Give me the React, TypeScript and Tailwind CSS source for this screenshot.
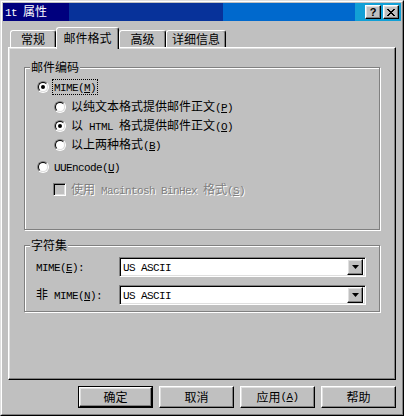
import React from 'react';

const mono = "font-['Liberation_Mono',monospace] text-[11px] tracking-[-0.6px]";
const raised =
  'border border-t-white border-l-white border-r-black border-b-black shadow-[inset_-1px_-1px_#808080,inset_1px_1px_#dfdfdf]';
const sunken =
  'border border-t-[#808080] border-l-[#808080] border-r-white border-b-white shadow-[inset_1px_1px_#000,inset_-1px_-1px_#dfdfdf]';

function Txt({ s }: { s: string }) {
  const parts = s.split(/([\x20-\x7e]+)/).filter(Boolean);
  return (
    <>
      {parts.map((p, i) =>
        /^[\x20-\x7e]+$/.test(p) ? (
          <span key={i} className={`${mono} whitespace-pre`}>
            {p}
          </span>
        ) : (
          <span key={i}>{p}</span>
        )
      )}
    </>
  );
}

function Label({ text, hot, suffix = '' }: { text: string; hot: string; suffix?: string }) {
  return (
    <span className="whitespace-pre">
      <Txt s={text} />
      <span className={mono}>
        (<span className="underline underline-offset-1">{hot}</span>){suffix}
      </span>
    </span>
  );
}

function Radio({ checked }: { checked?: boolean }) {
  return (
    <span className="inline-block w-[12px] h-[12px] shrink-0 rounded-full border border-t-[#808080] border-l-[#808080] border-r-white border-b-white">
      <span className="flex w-full h-full items-center justify-center rounded-full border border-t-black border-l-black border-r-[#dfdfdf] border-b-[#dfdfdf] bg-white">
        {checked && <span className="w-[4px] h-[4px] rounded-full bg-black" />}
      </span>
    </span>
  );
}

function RadioRow({
  checked,
  focus,
  indent,
  children,
}: {
  checked?: boolean;
  focus?: boolean;
  indent: string;
  children: React.ReactNode;
}) {
  return (
    <div className={`flex items-center h-[19px] ${indent}`}>
      <Radio checked={checked} />
      <span
        className={`ml-[3px] px-[1px] h-[16px] flex items-center leading-none border ${
          focus ? 'border-dotted border-black' : 'border-transparent'
        }`}
      >
        {children}
      </span>
    </div>
  );
}

function Group({ title, className, children }: { title: string; className: string; children: React.ReactNode }) {
  return (
    <div className={`relative w-[356px] border border-[#808080] shadow-[inset_1px_1px_#fff,1px_1px_#fff] ${className}`}>
      <span className="absolute -top-[7px] left-[5px] px-[1px] bg-[#c0c0c0] leading-[12px]">{title}</span>
      {children}
    </div>
  );
}

function Combo({ value }: { value: string }) {
  return (
    <div className={`w-[247px] h-[20px] bg-white flex items-center justify-between pl-[3px] pr-[2px] ${sunken}`}>
      <span className="leading-none">
        <Txt s={value} />
      </span>
      <span className={`w-[16px] h-[16px] bg-[#c0c0c0] flex items-center justify-center ${raised}`}>
        <svg width="7" height="4" viewBox="0 0 7 4">
          <path d="M0 0h7L3.5 4z" fill="#000" />
        </svg>
      </span>
    </div>
  );
}

function Tab({ label, active, w }: { label: string; active?: boolean; w: string }) {
  return (
    <div
      className={`${w} flex items-center justify-center rounded-t-[3px] border-t border-l border-r border-t-white border-l-white border-r-black shadow-[inset_-1px_0_#808080] bg-[#c0c0c0] ${
        active ? 'h-[22px] -mb-[2px] relative z-10 pb-[2px]' : 'h-[17px]'
      }`}
    >
      <span className="leading-none">{label}</span>
    </div>
  );
}

function Button({ children, isDefault }: { children: React.ReactNode; isDefault?: boolean }) {
  const inner = (
    <div className={`h-full w-full flex items-center justify-center leading-none ${raised}`}>{children}</div>
  );
  return isDefault ? (
    <div className="w-[75px] h-[22px] border border-black">{inner}</div>
  ) : (
    <div className="w-[75px] h-[22px]">{inner}</div>
  );
}

export default function App() {
  return (
    <div className="w-[404px] h-[416px] bg-[#c0c0c0] border border-t-[#dfdfdf] border-l-[#dfdfdf] border-r-black border-b-black font-['Noto_Sans_CJK_SC','Liberation_Sans',sans-serif] text-[12px] text-black select-none">
      <div className="h-full border border-t-white border-l-white border-r-[#808080] border-b-[#808080] p-[1px] flex flex-col">
        {/* title bar */}
        <div className="h-[18px] flex items-center justify-between pl-[2px] pr-[2px] text-white bg-[linear-gradient(90deg,#00007e_0px,#00007e_66px,#07329a_66px,#07329a_220px,#0069cd_220px,#0069cd_352px,#12a0d6_352px)]">
          <span className="leading-none">
            <Txt s="1t 属性" />
          </span>
          <div className="flex gap-[2px]">
            <div className={`w-[16px] h-[14px] bg-[#c0c0c0] flex items-center justify-center text-black ${raised}`}>
              <span className="font-['Liberation_Sans'] font-bold text-[11px] leading-none">?</span>
            </div>
            <div className={`w-[16px] h-[14px] bg-[#c0c0c0] flex items-center justify-center ${raised}`}>
              <svg width="8" height="7" viewBox="0 0 8 7" shapeRendering="crispEdges">
                <path d="M0 0h2v1h1v1h2V1h1V0h2v1H7v1H6v1H5v1h1v1h1v1h1v1H6V6H5V5H3v1H2v1H0V6h1V5h1V4h1V3H2V2H1V1H0z" fill="#000" />
              </svg>
            </div>
          </div>
        </div>

        <div className="flex flex-col px-[5px]">
          {/* tabs */}
          <div className="flex items-end h-[20px] mt-[6px] pl-[2px]">
            <Tab label="常规" w="w-[46px]" />
            <Tab label="邮件格式" w="w-[63px]" active />
            <Tab label="高级" w="w-[47px]" />
            <Tab label="详细信息" w="w-[60px]" />
          </div>

          {/* tab panel */}
          <div className="h-[333px] flex flex-col pl-[15px] border border-t-white border-l-white border-r-black border-b-black shadow-[inset_-1px_-1px_#808080,inset_1px_1px_#dfdfdf]">
            <Group title="邮件编码" className="mt-[19px] h-[163px] pt-[9px]">
              <RadioRow checked focus indent="pl-[12px]">
                <Label text="MIME" hot="M" />
              </RadioRow>
              <div className="mt-[1px]">
                <RadioRow indent="pl-[29px]">
                  <Label text="以纯文本格式提供邮件正文" hot="P" />
                </RadioRow>
                <RadioRow checked indent="pl-[29px]">
                  <Label text="以 HTML 格式提供邮件正文" hot="O" />
                </RadioRow>
                <RadioRow indent="pl-[29px]">
                  <Label text="以上两种格式" hot="B" />
                </RadioRow>
              </div>
              <div className="mt-[3px]">
                <RadioRow indent="pl-[12px]">
                  <Label text="UUEncode" hot="U" />
                </RadioRow>
              </div>
              <div className="flex items-center h-[19px] mt-[4px] pl-[28px]">
                <span className={`w-[13px] h-[13px] bg-[#c0c0c0] ${sunken}`} />
                <span className="ml-[3px] px-[1px] border border-transparent leading-none text-[#808080] [text-shadow:1px_1px_0_#fff]">
                  <Label text="使用 Macintosh BinHex 格式" hot="S" />
                </span>
              </div>
            </Group>

            <Group title="字符集" className="mt-[15px] h-[67px] pt-[11px]">
              <div className="flex items-center pl-[11px]">
                <span className="w-[83px] leading-none">
                  <Label text="MIME" hot="E" suffix=":" />
                </span>
                <Combo value="US ASCII" />
              </div>
              <div className="flex items-center pl-[11px] mt-[8px]">
                <span className="w-[83px] leading-none">
                  <Label text="非 MIME" hot="N" suffix=":" />
                </span>
                <Combo value="US ASCII" />
              </div>
            </Group>
          </div>

          {/* buttons */}
          <div className="flex justify-end gap-[6px] mt-[6px]">
            <Button isDefault>确定</Button>
            <Button>取消</Button>
            <Button>
              <span>应用</span>
              <span className={mono}>
                (<span className="underline underline-offset-1">A</span>)
              </span>
            </Button>
            <Button>帮助</Button>
          </div>
        </div>
      </div>
    </div>
  );
}
